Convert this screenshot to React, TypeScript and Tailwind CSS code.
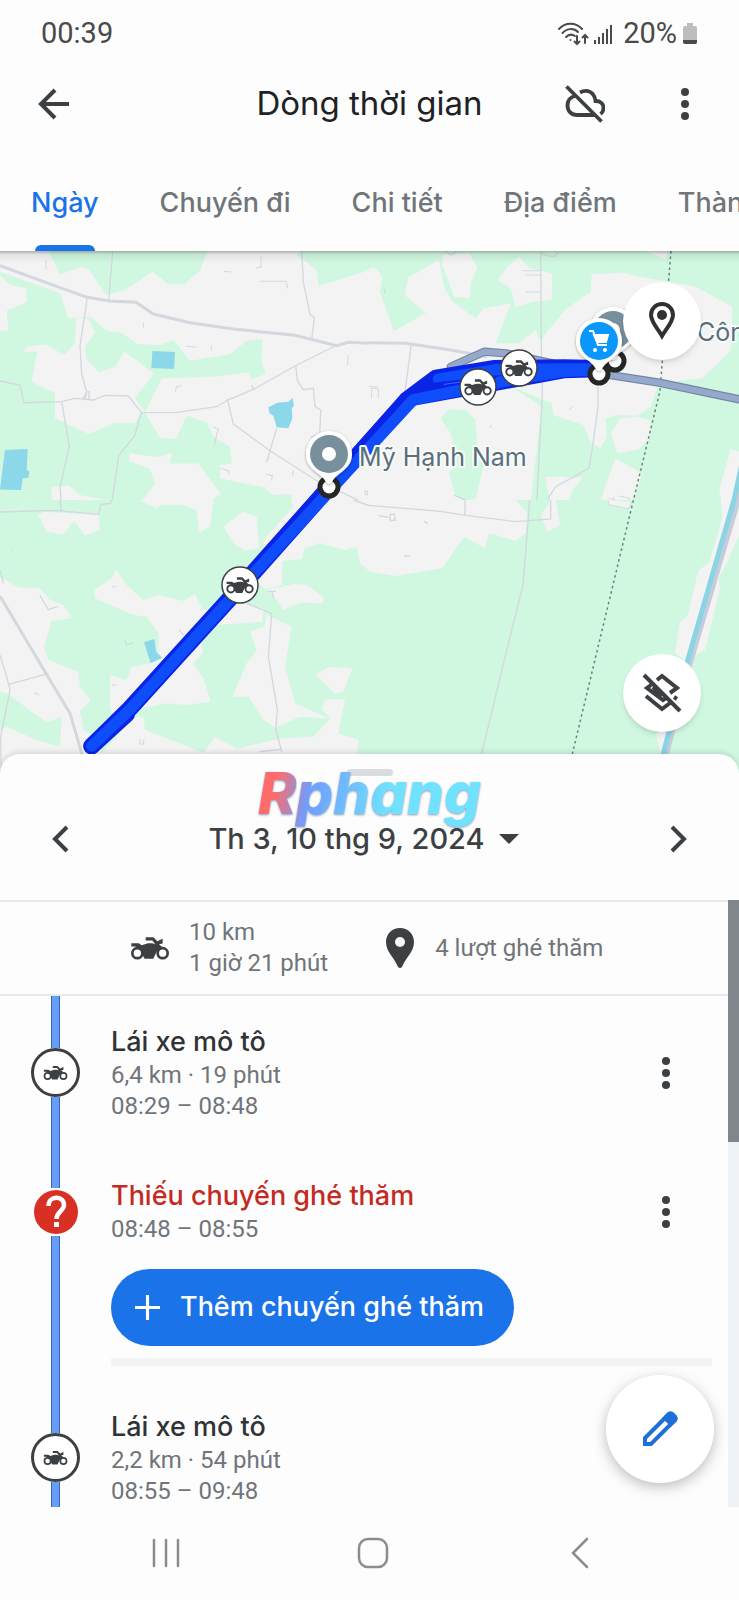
import { useState, type ReactNode } from "react";

const TABS = ["Ngày", "Chuyến đi", "Chi tiết", "Địa điểm", "Thành phố"];

function Motorcycle({ className }: { className?: string }) {
  return (
    <svg viewBox="390 142 120 74" className={className} fill="#3c4043" aria-hidden="true">
      <MotorcycleShape />
    </svg>
  );
}

function MotorcycleShape() {
  return (
    <>
      <circle cx="412" cy="193" r="15" fill="none" stroke="#3c4043" strokeWidth="8" />
      <circle cx="488" cy="193" r="15" fill="none" stroke="#3c4043" strokeWidth="8" />
      <path d="M394 163h22l9 6 19-6h13l9 4-9-12h-20v-10h23l12 12 16-7v14l-11 2 12 11-8 2c-8 2-10 8-14 16l-7 15h-26l-7-12c-1-15-10-22-22-25h-11z" />
    </>
  );
}

function MoreButton({ label }: { label: string }) {
  return (
    <button aria-label={label} className="flex h-12 w-12 items-center justify-center">
      <svg width="8" height="32" viewBox="0 0 8 32" fill="#3c4043">
        <circle cx="4" cy="4" r="4" />
        <circle cx="4" cy="16" r="4" />
        <circle cx="4" cy="28" r="4" />
      </svg>
    </button>
  );
}

function StatusBar() {
  return (
    <div className="flex h-[68px] items-center justify-between px-[41px] text-[29px] text-[#4a4a4a]">
      <span>00:39</span>
      <div className="flex items-center">
        <svg width="32" height="24" viewBox="0 0 32 24" fill="none" stroke="#4a4a4a" strokeWidth="2" strokeLinecap="round">
          <path d="M2 7C8 0 19 0 25 7M5.500 11C10 6 17 6 21 10M9 15c3-3 6-3 9-1" />
          <circle cx="13.500" cy="18" r="1" fill="#4a4a4a" stroke="none" />
          <path d="M20 14v8M17.500 19.500L20 22l2.500-2.500M28 21v-8M25.500 15.500L28 13l2.500 2.500" />
        </svg>
        <svg className="ml-1" width="20" height="22" viewBox="0 0 20 22" fill="#4a4a4a">
          <path d="M1 17h2v4H1zM5 14h2v7H5zM9 10h2v11H9zM13 6h2v15h-2zM17 2h2v19h-2z" />
        </svg>
        <span className="ml-[10px]">20%</span>
        <svg className="ml-[5px]" width="16" height="22" viewBox="0 0 16 22">
          <path d="M5 0h6v3h2a2 2 0 0 1 2 2v14a2 2 0 0 1-2 2H3a2 2 0 0 1-2-2V5a2 2 0 0 1 2-2h2z" fill="#bdbdbd" />
          <path d="M1 17h14v2a2 2 0 0 1-2 2H3a2 2 0 0 1-2-2z" fill="#4a4a4a" />
        </svg>
      </div>
    </div>
  );
}

function AppBar() {
  return (
    <div className="grid h-[72px] grid-cols-[1fr_auto_1fr] items-center">
      <button aria-label="Quay lại" className="ml-[30px] flex h-12 w-12 items-center justify-center">
        <svg width="32" height="32" viewBox="0 0 32 32" fill="none" stroke="#3c4043" strokeWidth="4">
          <path d="M31 16H4M17 2L3 16l14 14" />
        </svg>
      </button>
      <h1 className="font-['Inter'] text-[33px] text-[#202124]">Dòng thời gian</h1>
      <div className="flex items-center justify-end gap-[52px] pr-[30px]">
        <button aria-label="Sao lưu đang tắt" className="flex h-12 w-12 items-center justify-center">
          <svg width="40" height="38" viewBox="0 0 40 38" fill="none" stroke="#3c4043" strokeWidth="3.800">
            <path d="M1.500 1.500l35 35" />
            <path d="M10 11C5 12 2.500 16 2.500 20.500c0 5.500 4 9.500 9.500 9.500h17.500M15 7.500c7-4 14.500-.5 15.500 8.500 5 0 8 3 8 7 0 2.500-1 4.500-3 6" />
          </svg>
        </button>
        <MoreButton label="Tùy chọn khác" />
      </div>
    </div>
  );
}

function Tabs() {
  const [active, setActive] = useState(0);
  return (
    <div role="tablist" className="flex h-[111px] gap-[61px] overflow-hidden pl-[31px] font-['Inter'] text-[27px] font-medium whitespace-nowrap">
      {TABS.map((tab, i) => (
        <button
          key={tab}
          role="tab"
          aria-selected={i === active}
          onClick={() => setActive(i)}
          className={`relative shrink-0 pt-4 ${i === active ? "text-[#1a73e8]" : "text-[#70757a]"}`}
        >
          {tab}
          {i === active && <span className="absolute inset-x-1 bottom-0 h-[6px] rounded-t-md bg-[#1a73e8]" />}
        </button>
      ))}
    </div>
  );
}

function MapMoto({ x, y }: { x: number; y: number }) {
  return (
    <g transform={`translate(${x} ${y})`}>
      <circle r="18" fill="#fff" stroke="#3c4043" strokeWidth="1.500" />
      <g transform="scale(.24) translate(-450 -177)" fill="#3c4043">
        <MotorcycleShape />
      </g>
    </g>
  );
}

function MapPin({ x, y, color, children }: { x: number; y: number; color: string; children?: ReactNode }) {
  return (
    <g transform={`translate(${x} ${y})`}>
      <path
        d="M0-23A23 23 0 0 0-23 0C-23 16-8 18-3 28Q0 32 3 28C8 18 23 16 23 0A23 23 0 0 0 0-23z"
        fill="#fff"
        filter="url(#pinShadow)"
      />
      <circle r="19" fill={color} />
      {children}
    </g>
  );
}

// Terrain is drawn in four sheets at three times the map scale.
function Terrain() {
  return (
    <>
      <g transform="translate(0 250) scale(.3334)">
        <path fill="#f3f3f3" d="M0 0h1110v780H0z" />
        <path
          fill="#d0f7e0"
          d="M145 3l35 70 65-23 20 8 53 77 57-15 83-55 47 38h47l48-41 23-59zM0 65l180 65 25 75 23-2-3 77-33 35-57-32-55 7-7 15h39l-17 90 70 35v75l102 47 78-34 60 2 19-33h11l45 78 48 2 32-70 60 20 20 43 50 30 5 50-35 5v40l130 27 30 23 55-3 5 48H0zM255 290l30-45-20-38-35-2 42-5 48 43 48 7 42 32 70 3 40-15 50 62 120-19 50-41 47-4-4 62 14 42-42 15-10-20-105 13-155 5-50 102-30-42 57-75-89-65-28 45-48 17-39-42zM890 15l60 45 5 47 155-47V3H905z"
        />
        <path
          fill="#f3f3f3"
          d="M0 75l30 30 50 10v42l-60 25 5 58-25 3zM388 610l87 12 40-14-5 32h85l68 92-73 48-175-15 50-65-15-42-62-26zM155 710l53-3 32 28 90 17-30 28H155z"
        />
        <path fill="#8cd7ea" d="M457 303l68 3-3 51-68-3zM805 472l27-14 33-3 12-12 5 24-7 8 2 30-12 30-35-3-10-35-12-7zM15 600l68-3-3 63 8 5-3 18-17 2-5 35-63-2z" />
        <g fill="none" stroke="#d3d8de" strokeWidth="4">
          <path strokeWidth="9" d="M0 47l180 66 82 29 66 11 80 4 52 35 110 26 130 19 185 19 125 31 35-10 65 3" />
          <path d="M262 142l-22 145 5 85 15 53-10 20M338 3l-12 150M905 3l5 95 20 95 13 10-8 65M0 393l60 12 12 53 113-3 40-10 55 5 35-14 70 2 40 50 108-1 117-17 33-20 77-32 125-70 120-60M185 455l23 135-28 120 5 70M424 487l-20 70-48 60-20 140-35 5v18M255 447l5-22h7v22M682 447l18 75 110 80 140 90 160 75M830 535l-30 100M887 347l5 45 18 27 30-4 5 55 17 10-3 70-27 12M755 405l5 12" />
          <path strokeWidth="3" d="M780 94h78l5 22M783 20v30l-15 4M526 425l3-15 15-2M672 64l22 2M557 288l30 4M430 218v15M138 30v28M634 288v14M1045 315l-3 30M640 530l15 8-5 15-8 36M662 655l24 7v12M797 672l20 5-3 15M880 660l-3 18M1095 722l7 2v10h-7zM797 635l10-12" />
        </g>
      </g>

      <g transform="translate(369 250) scale(.3334)">
        <path fill="#d0f7e0" d="M0 0h1113v780H0z" />
        <path
          fill="#f3f3f3"
          d="M0 55h22l18 27-8 43 43 118 95-53-63-55 11-53 92-52 15 80 25 45 70 50 25-30 80-15-45 120h70l50-40 15 35 15-25 60-72 75-53 3-53 102-4 15 7 195 35 110 60-5 130-85 85-130 15-25 70-40 27-60-2-35 10 3 55-20 35-30-20-20-50-90-30-5-35-120-50 90 60-35 305H0zM220 15l80-5 25 40-20 50-2 45-48-5-35-95zM385 90l35-45 30-25 30 35 70 15-2 80-58 5-50 17-15-57zM725 550l30-45 45-5 45 10-5 60-35 30-60 10zM740 625l80 45-25 70-30 40h-80l30-90zM530 680l110 2-30 40-20 58h-45zM830 3l60 25 3-25zM1085 598l28 7v175h-50l-13-60z"
        />
        <path fill="#d0f7e0" d="M215 505l25-27 50 2 30 30 5 90 20 40-25 105-30 10-32-20-18-70 25-15-20-100z" />
        <g fill="none" stroke="#d3d8de" strokeWidth="4">
          <path strokeWidth="9" d="M0 278l110 2 135 20 110 20" />
          <path d="M515 3l2 300 3 120-18 357M127 282l-20 150M687 410v60l-15 110-12 75-100 55-20 30v40M0 765l130 15M255 735l33 15v30M230 3l15 12 10-4 5-8M515 12l40 8 12-12" />
          <path strokeWidth="3" d="M460 62h55M470 75h45M468 126h45M610 468l-8 12M0 410h25M8 445v-30l20 2v28M718 745l65 15M735 740l-5 20M750 738l30 6v20M45 115l3 15M365 525v10" />
        </g>
      </g>

      <g transform="translate(0 500) scale(.3334)">
        <path fill="#d0f7e0" d="M0 0h1110v825H0z" />
        <path
          fill="#f3f3f3"
          d="M95 0l-35 25-60 10V0zM115 45l15-10 165 10 5 43-45 19-33-45-32 41-50-8zM0 230l55 32 65 3 30 35 40 15 25 40-60 7-23 78 13 40 90 35 5 45 32 40-32 35 10 55 50 30 10 105H0zM283 270l57-40 5-25 35 50 50 45 45-15 75 18 35-21 23 48 112-20 70 15-3 40-137 10-45 55 3 30-28 30 30 45 22 70-72 10-60-5-80 15-70 75-20-80v-95l50 15 15-40 55-10 25-20v-70l-35-50-40-5-115-50zM670 80l58-45 42 15 7 95-42 7-35-22zM415 0h225l-10 80-32 17-10-67-38-15h-70l-10 10zM795 150l-5-30 90-100-10-20h240v215l-30-25-10-50-35 10-75-20-45 15-10 33-57 4-3 73-45 13-60-38zM800 270l80-18 40 3 50 35v20l-70-2-50 22-20-30zM800 345l75 35-20 120 30 110 100 45-85-5-75 33-35-23-45-70h-48l43-100 30-40-20-55 43-15zM948 525l37-25 72 5-27 70-25 7zM965 625l10-27h60l-20 102 62 20-17 105H250l150-175h30l5 40 65 25 110 42 35-47 65 35 130-30 100-5 50-55z"
        />
        <path fill="#d0f7e0" d="M0 575l20 5 120 87 45-17-5 90-70-20-90-40-20 10zM0 0h95L60 22 0 33z" />
        <path fill="#8cd7ea" d="M432 427l31-10 5 38 19 18-35 17z" />
        <g fill="none" stroke="#d3d8de" strokeWidth="4">
          <path strokeWidth="9" d="M0 288l135 227 75 125 35 120 10 60" />
          <path d="M0 36l165-5 130 12 8-30 30-3V0M180 0l4 32M0 465l20 65 10 40-20 100-8 40 2 110M28 552l75-20 42-12M740 310l75 30-10 130 27 160-5 55 18 70M778 755l68-8M120 287l25 42 28-10M0 210l10 40M1060 0l50 18M803 274h25M815 274l5 18" />
          <path strokeWidth="3" d="M375 420l3 15 22-6M420 717v15h11v-14M337 262l12-3M337 555l12-1M102 579l15 5M35 147l4 4M537 388l15 18" />
        </g>
      </g>

      <g transform="translate(369 500) scale(.3334)">
        <path fill="#d0f7e0" d="M0 0h1113v825H0z" />
        <path
          fill="#f3f3f3"
          d="M0 0h440l35 40-5 60-30 22-80-22-12 45-63-35-65 95-140 23-80-13zM545 0h15l13 75-38 20-20-45zM955 350l33-140 32-20L1060 50l-5-50h58v100l-40 90-25 45 5 30-45 185-60 30-30-20 15-95zM860 700l40-20-20 100z"
        />
        <path fill="none" stroke="#d3d8de" strokeWidth="4" d="M0 16l215 18 75 12 150 19 105-8V0M482 0l-10 130-10 125-50 200-75 310M288 0v45M28 47l30 5M62 44l14-2 3 18-15 2zM105 168l18-1M165 64l12 7" />
        <path fill="#f3f3f3" stroke="#d3d8de" strokeWidth="3" d="M718 0v14l60 12 10-20" />
      </g>
    </>
  );
}

function RouteMap() {
  return (
    <div className="relative">
      <svg viewBox="0 251 739 523" className="block h-auto w-full" role="img" aria-label="Bản đồ tuyến đường">
        <defs>
          <filter id="pinShadow" x="-30%" y="-30%" width="160%" height="160%">
            <feDropShadow dx="0" dy="1" stdDeviation="1.500" floodOpacity=".35" />
          </filter>
          <linearGradient id="topShade" x1="0" y1="0" x2="0" y2="1">
            <stop offset="0" stopColor="#000" stopOpacity=".28" />
            <stop offset=".3" stopColor="#000" stopOpacity=".07" />
            <stop offset="1" stopColor="#000" stopOpacity="0" />
          </linearGradient>
        </defs>
        <Terrain />

        <path d="M747 450l-10 51-48 163-34 130" fill="none" stroke="#c6ccd9" strokeWidth="7" />
        <path d="M745 450l-11 50-47 163-34 130" fill="none" stroke="#8ad4e4" strokeWidth="5" />
        <path d="M671 251l-11 140-28 115-65 270" fill="none" stroke="#64857a" strokeWidth="1.500" strokeDasharray="2.500 3" />

        <g transform="translate(0 250) scale(.3334)" fill="none" strokeLinecap="round" strokeLinejoin="round">
          <path stroke="#7485a6" strokeWidth="25" d="M1352 350l100-45 65 5 280 60 180 28 240 50" />
          <path stroke="#97a9cb" strokeWidth="18" d="M1352 350l100-45 65 5 280 60 180 28 240 50" />
          <path stroke="#0a24e6" strokeWidth="50" d="M1797 355l-107-2-210 2-172 29-88 66-480 540-350 385-115 113" />
          <path stroke="#0a24e6" strokeWidth="50" d="M1797 357l-107 3-180 33-265 48-25 9M275 1488l105-96" />
          <path stroke="#0f4dfb" strokeWidth="34" d="M1797 357h-107l-200 2-175 28M1797 360l-107 4-180 30-270 55-500 544-350 385-115 110" />
          <path stroke="#0a24e6" strokeWidth="14" d="M1300 405l90-10 90-12" />
          <path stroke="#5d83ff" strokeWidth="2" d="M1332 403l50-7" />
        </g>

        <circle cx="615" cy="361" r="9" fill="#fff" stroke="#262626" strokeWidth="5" />
        <MapPin x={613} y={330} color="#78909c">
          <circle r="7" fill="#fff" />
        </MapPin>
        <circle cx="599" cy="374" r="9" fill="#fff" stroke="#262626" strokeWidth="5" />
        <MapPin x={599} y={341} color="#0a96fb">
          <g fill="none" stroke="#fff" strokeWidth="2">
            <path d="M-10-10h4L-1 4H8M-5-6H9L7 1H-2z" />
            <path fill="#fff" stroke="none" d="M-5-7H10L7 2H-2z" />
          </g>
          <circle cx="-4" cy="9" r="2" fill="#fff" />
          <circle cx="6" cy="9" r="2" fill="#fff" />
        </MapPin>
        <circle cx="329" cy="487" r="9" fill="#fff" stroke="#262626" strokeWidth="5" />
        <MapPin x={329} y={454} color="#78909c">
          <circle r="7" fill="#fff" />
        </MapPin>
        <MapMoto x={478} y={387} />
        <MapMoto x={519} y={368} />
        <MapMoto x={240} y={585} />

        <g className="font-['Inter']" fontSize="25" fill="#5a6f7a" stroke="#f8faf9" strokeWidth="4" strokeLinejoin="round" paintOrder="stroke">
          <text x="359" y="466">Mỹ Hạnh Nam</text>
          <text x="697" y="341">Công</text>
        </g>
        <rect y="251" width="739" height="12" fill="url(#topShade)" />
      </svg>

      <button aria-label="Địa điểm" className="absolute top-[31px] right-[38px] flex h-[78px] w-[78px] items-center justify-center rounded-full bg-white shadow-md">
        <svg width="28" height="40" viewBox="0 0 28 40">
          <path d="M14 3C8 3 3 7.500 3 14c0 7 7 14 11 21 4-7 11-14 11-21C25 7.500 20 3 14 3z" fill="none" stroke="#2f3133" strokeWidth="4" />
          <circle cx="14" cy="14" r="5" fill="#2f3133" />
        </svg>
      </button>
      <button aria-label="Ẩn lớp bản đồ" className="absolute right-[38px] bottom-[42px] flex h-[78px] w-[78px] items-center justify-center rounded-full bg-white shadow-md">
        <svg width="40" height="40" viewBox="0 0 40 40" fill="none" stroke="#3c4043" strokeWidth="4">
          <path d="M2 2l36 36M15 7l5-4 15 12-7 5M9 12l-4 3 16 12 3-2M11 14l9 9M4 23l16 13 8-6M32 24l3 2" />
        </svg>
      </button>
    </div>
  );
}

function DateHeader() {
  return (
    <div className="relative h-[146px] pt-[15px]">
      <div className="mx-auto h-[7px] w-[46px] rounded-full bg-[#dadce0]" />
      <div className="mt-[39px] flex h-12 items-center justify-between px-[37px]">
        <button aria-label="Ngày trước" className="flex h-12 w-12 items-center justify-center">
          <svg width="18" height="28" viewBox="0 0 18 28" fill="none" stroke="#3c4043" strokeWidth="4">
            <path d="M15 2L3 14l12 12" />
          </svg>
        </button>
        <button className="flex items-center gap-[14px] pr-3 font-['Inter'] text-[29px] font-medium text-[#3c4043]">
          Th 3, 10 thg 9, 2024
          <svg width="20" height="10" viewBox="0 0 20 10" fill="#3c4043">
            <path d="M0 0h20L10 10z" />
          </svg>
        </button>
        <button aria-label="Ngày sau" className="flex h-12 w-12 items-center justify-center">
          <svg width="18" height="28" viewBox="0 0 18 28" fill="none" stroke="#3c4043" strokeWidth="4">
            <path d="M3 2l12 12L3 26" />
          </svg>
        </button>
      </div>
      <div className="pointer-events-none absolute inset-x-0 top-1 text-center">
        <span className="inline-block bg-[linear-gradient(100deg,#ff6b6b_12%,#6f9dff_26%,#70e2ff_58%)] bg-clip-text px-2 font-['Inter'] text-[58px] leading-[70px] font-extrabold text-transparent italic drop-shadow-[0_1px_1px_rgba(60,90,120,0.6)]">
          Rphang
        </span>
      </div>
    </div>
  );
}

function Summary() {
  return (
    <div className="flex h-[96px] items-center border-y-2 border-[#e8eaed] pl-[130px] text-[24px] leading-[31px] text-[#70757a]">
      <Motorcycle className="h-[25px] w-[40px]" />
      <p className="ml-[19px]">
        10 km
        <br />1 giờ 21 phút
      </p>
      <svg className="ml-[58px]" width="28" height="40" viewBox="0 0 28 40">
        <path fillRule="evenodd" d="M14 0C6 0 0 6 0 14c0 10 8 15 12 25q2 2 4 0c4-10 12-15 12-25C28 6 22 0 14 0zm0 9a5 5 0 1 1 0 10 5 5 0 0 1 0-10z" fill="#3c4043" />
      </svg>
      <p className="ml-[21px]">4 lượt ghé thăm</p>
    </div>
  );
}

function Rail({ lead, children }: { lead: string; children: ReactNode }) {
  return (
    <div className="flex w-[111px] shrink-0 flex-col items-center">
      <div className={`w-[9px] border-x border-[#3367b5] bg-[#669df6] ${lead}`} />
      {children}
      <div className="w-[9px] flex-1 border-x border-[#3367b5] bg-[#669df6]" />
    </div>
  );
}

function Ride({ meta, time, menu }: { meta: string; time: string; menu?: boolean }) {
  return (
    <li className="flex">
      <Rail lead="h-[52px]">
        <div className="flex h-[49px] w-[49px] items-center justify-center rounded-full border-3 border-[#3c4043] bg-white">
          <Motorcycle className="h-[16px] w-[25px]" />
        </div>
      </Rail>
      <div className={`flex-1 pt-7 ${menu ? "pb-7" : ""}`}>
        <h2 className="font-['Inter'] text-[27px] leading-9 font-medium text-[#303235]">Lái xe mô tô</h2>
        <p className="text-[24px] leading-[31px] text-[#70757a]">
          {meta}
          <br />
          {time}
        </p>
      </div>
      {menu && (
        <div className="mr-[38px] pt-[53px]">
          <MoreButton label="Tùy chọn chuyến đi" />
        </div>
      )}
    </li>
  );
}

function MissingVisit() {
  return (
    <li className="flex">
      <Rail lead="h-[38px]">
        <svg className="my-px" width="46" height="46" viewBox="0 0 46 46">
          <circle cx="23" cy="23" r="22" fill="#d93025" />
          <path d="M15.500 17c0-11 15.500-10.500 15.500-1 0 6-7.500 6.500-7.500 14" fill="none" stroke="#fff" strokeWidth="4.500" />
          <path d="M21 33h5v5h-5z" fill="#fff" />
        </svg>
      </Rail>
      <div className="flex-1 pt-7 pb-[15px]">
        <div className="flex justify-between">
          <div>
            <h2 className="font-['Inter'] text-[27px] leading-9 font-medium text-[#c5291f]">Thiếu chuyến ghé thăm</h2>
            <p className="text-[24px] leading-[31px] text-[#70757a]">08:48 – 08:55</p>
          </div>
          <div className="mr-[38px] pt-[10px]">
            <MoreButton label="Tùy chọn lượt ghé thăm" />
          </div>
        </div>
        <button className="mt-6 flex h-[77px] items-center rounded-full bg-[#1a73e8] pr-[30px] pl-6 font-['Inter'] text-[27px] font-medium text-white">
          <svg className="mr-5" width="25" height="25" viewBox="0 0 24 24" stroke="#fff" strokeWidth="3">
            <path d="M12 0v24M0 12h24" />
          </svg>
          Thêm chuyến ghé thăm
        </button>
        <div className="mt-3 mr-4 h-2 bg-[#f1f3f4]" />
      </div>
    </li>
  );
}

function NavBar() {
  return (
    <nav className="relative grid h-[92px] grid-cols-3 bg-[#fdfdfd] pr-14 pl-[62px]">
      <button aria-label="Gần đây" className="flex items-center justify-center">
        <svg width="30" height="30" viewBox="0 0 30 30" stroke="#8c8c8c" strokeWidth="2.500" strokeLinecap="round">
          <path d="M3 2v26M15 2v26M27 2v26" />
        </svg>
      </button>
      <button aria-label="Màn hình chính" className="flex items-center justify-center">
        <svg width="32" height="32" viewBox="0 0 32 32" fill="none" stroke="#8c8c8c" strokeWidth="2.500">
          <rect x="2" y="2" width="28" height="28" rx="9" />
        </svg>
      </button>
      <button aria-label="Trở về" className="flex items-center justify-center">
        <svg width="20" height="32" viewBox="0 0 20 32" fill="none" stroke="#8c8c8c" strokeWidth="2.500" strokeLinecap="round">
          <path d="M17 2L3 16l14 14" />
        </svg>
      </button>
    </nav>
  );
}

export default function App() {
  return (
    <div className="overflow-hidden bg-[#fdfdfd] font-['Roboto',sans-serif]">
      <header>
        <StatusBar />
        <AppBar />
        <Tabs />
      </header>
      <RouteMap />
      <main className="relative -mt-5 rounded-t-[20px] bg-[#fdfdfd] shadow-[0_-1px_6px_rgba(0,0,0,0.15)]">
        <DateHeader />
        <div className="flex">
          <div className="flex-1">
            <Summary />
            <ul>
              <Ride meta="6,4 km · 19 phút" time="08:29 – 08:48" menu />
              <MissingVisit />
              <Ride meta="2,2 km · 54 phút" time="08:55 – 09:48" />
            </ul>
          </div>
          <div className="w-[11px] bg-[#eff3f5]">
            <div className="h-[242px] bg-[#80868b]" />
          </div>
        </div>
        <button aria-label="Chỉnh sửa" className="absolute right-[25px] bottom-6 flex h-[108px] w-[108px] items-center justify-center rounded-full bg-white shadow-[0_4px_14px_rgba(0,0,0,0.25)]">
          <svg width="36" height="36" viewBox="0 0 36 36" fill="none" stroke="#1f6fd8" strokeWidth="4">
            <path d="M3 27L27 3q2-1 3 0l3 3q1 2 0 3L9 33H3z" />
            <path d="M23 7l6 6 4-4q1-1 0-3l-3-3q-2-1-3 0z" fill="#1f6fd8" />
          </svg>
        </button>
      </main>
      <NavBar />
    </div>
  );
}
